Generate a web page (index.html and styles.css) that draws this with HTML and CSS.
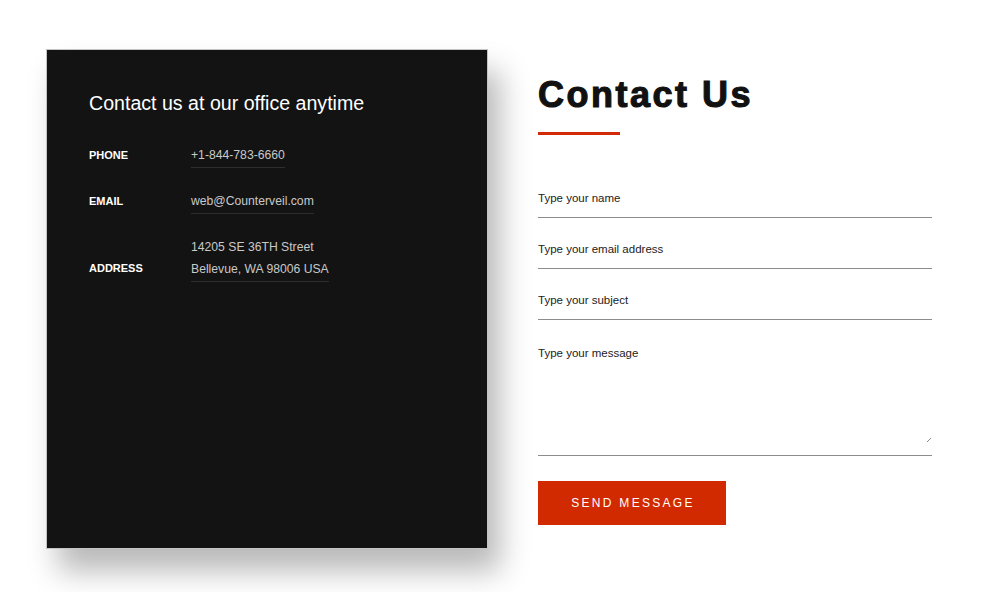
FILE: index.html
```html
<!DOCTYPE html>
<html lang="en">
<head>
<meta charset="utf-8">
<title>Contact Us</title>
<link rel="stylesheet" href="styles.css">
</head>
<body>
<div class="page">
  <section class="info">
    <h2 class="info-title">Contact us at our office anytime</h2>
    <div class="row">
      <div class="label">PHONE</div>
      <div class="value"><span class="link">+1-844-783-6660</span></div>
    </div>
    <div class="row">
      <div class="label">EMAIL</div>
      <div class="value"><span class="link">web@Counterveil.com</span></div>
    </div>
    <div class="row row-address">
      <div class="label">ADDRESS</div>
      <div class="value"><span class="link">14205 SE 36TH Street<br>Bellevue, WA 98006 USA</span></div>
    </div>
  </section>
  <section class="form-col">
    <h1 class="title">Contact Us</h1>
    <div class="bar"></div>
    <form class="form">
      <input class="field" type="text" placeholder="Type your name">
      <input class="field" type="email" placeholder="Type your email address">
      <input class="field" type="text" placeholder="Type your subject">
      <div class="area-wrap">
        <textarea class="field area" placeholder="Type your message"></textarea>
        <span class="grip"></span>
      </div>
      <button class="send" type="button">SEND MESSAGE</button>
    </form>
  </section>
</div>
</body>
</html>
```

FILE: styles.css
```css
* { box-sizing: border-box; }
html, body { margin: 0; padding: 0; background: #fff; }
body { font-family: "Liberation Sans", Arial, sans-serif; min-height: 592px; }

.page {
  display: flex;
  align-items: flex-start;
  gap: 50px;
  padding: 49px 0 0 46px;
}

.info {
  width: 442px;
  height: 500px;
  background: #131313;
  border: 1px solid #c4c4c4;
  padding: 41px 42px 0 42px;
  box-shadow: 12px 22px 28px rgba(0, 0, 0, 0.28);
  color: #fff;
}

.info-title {
  margin: 0 0 29px 0;
  font-weight: 400;
  font-size: 19.6px;
  line-height: 24px;
  color: #fff;
}

.row {
  display: flex;
  align-items: flex-start;
  margin-bottom: 22px;
}
.row-address { align-items: flex-end; margin-top: 9px; }

.label {
  width: 102px;
  font-size: 11px;
  font-weight: 700;
  line-height: 22px;
  color: #fff;
}
.row-address .label { padding-bottom: 3px; }

.value {
  font-size: 12.2px;
  line-height: 22px;
  color: #c9c9c9;
}
.link {
  display: inline-block;
  border-bottom: 1px solid #2e2e2e;
  padding-bottom: 1px;
}

.form-col {
  width: 394px;
  padding-top: 23px;
}

.title {
  margin: 0;
  font-family: "Liberation Sans", Arial, sans-serif;
  font-weight: 700;
  font-size: 36px;
  line-height: 46px;
  letter-spacing: 2.5px;
  color: #111;
  -webkit-text-stroke: 1.1px #111;
}

.bar {
  width: 82px;
  height: 3px;
  background: #d22a08;
  margin-top: 14px;
}

.form {
  display: flex;
  flex-direction: column;
  align-items: flex-start;
  margin-top: 44px;
}

.field {
  display: block;
  width: 100%;
  height: 39px;
  border: 0;
  border-bottom: 1px solid #8c8c8c;
  padding: 0;
  margin: 0 0 12px 0;
  background: transparent;
  font-family: "Liberation Sans", Arial, sans-serif;
  font-size: 11.5px;
  color: #222;
  outline: none;
}
.field::placeholder { color: #222; opacity: 1; }

.area-wrap {
  position: relative;
  width: 100%;
  margin-bottom: 25px;
}
.area {
  height: 124px;
  padding-top: 15px;
  resize: none;
  margin: 0;
}
.grip {
  position: absolute;
  right: 1px;
  bottom: 14px;
  width: 4px;
  height: 4px;
  background: linear-gradient(135deg, transparent 45%, #888 45%, #888 60%, transparent 60%);
}

.send {
  width: 188px;
  height: 44px;
  border: 0;
  background: #d22a00;
  color: #fff;
  font-family: "Liberation Sans", Arial, sans-serif;
  font-size: 12px;
  letter-spacing: 2.3px;
  padding: 0 0 0 2px;
  cursor: pointer;
}
```
